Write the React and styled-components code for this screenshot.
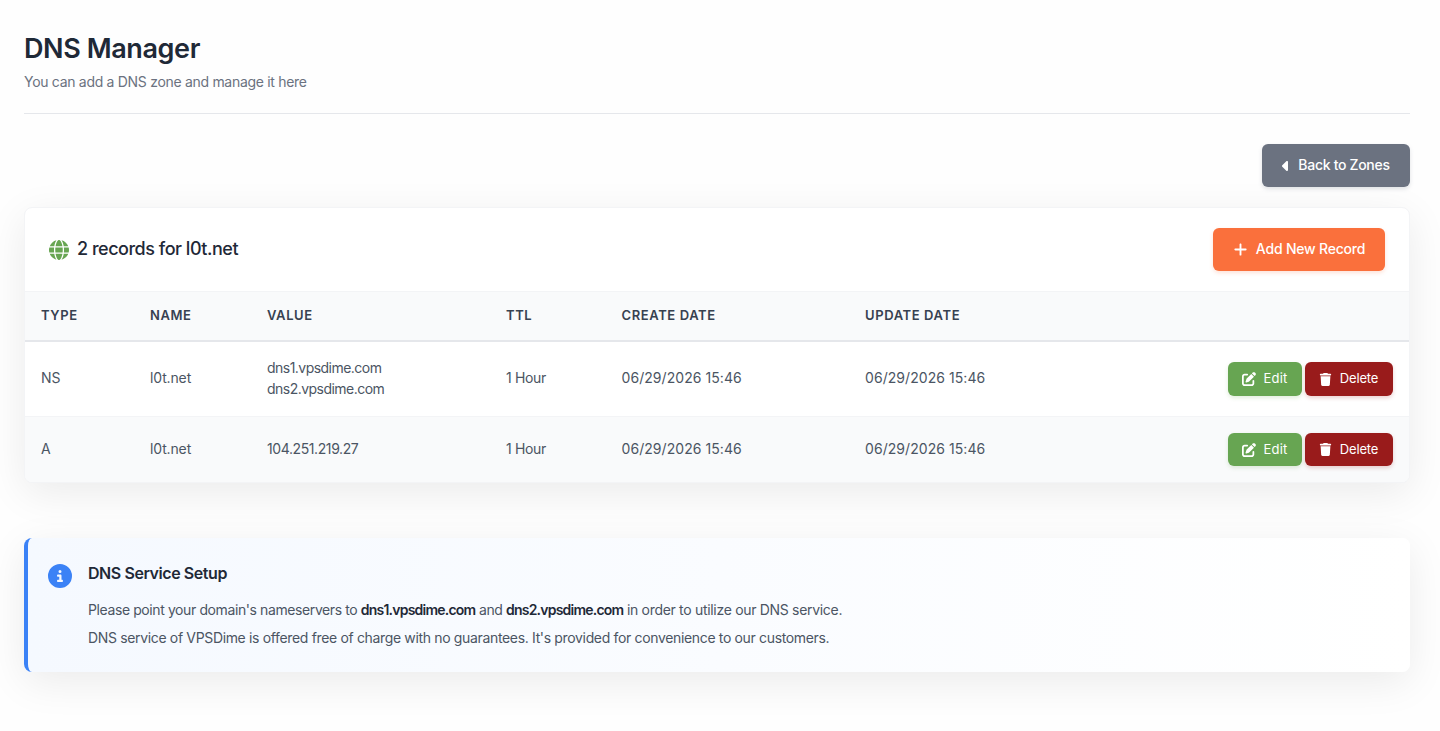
import React from 'react';
import styled, { createGlobalStyle } from 'styled-components';
import {
  FaCaretLeft,
  FaCircleInfo,
  FaGlobe,
  FaPenToSquare,
  FaPlus,
  FaTrash,
} from 'react-icons/fa6';

const records = [
  {
    type: 'NS',
    name: 'l0t.net',
    values: ['dns1.vpsdime.com', 'dns2.vpsdime.com'],
    ttl: '1 Hour',
    created: '06/29/2026 15:46',
    updated: '06/29/2026 15:46',
  },
  {
    type: 'A',
    name: 'l0t.net',
    values: ['104.251.219.27'],
    ttl: '1 Hour',
    created: '06/29/2026 15:46',
    updated: '06/29/2026 15:46',
  },
];

const App = () => {
  return (
    <>
      <GlobalStyle />
      <Page>
        <PageHeader>
          <Title>DNS Manager</Title>
          <Subtitle>You can add a DNS zone and manage it here</Subtitle>
        </PageHeader>
        <Toolbar>
          <Button $width={148} $color="#6b7280" $tracking={-0.3}>
            <BackIcon viewBox="0 0 256 512" />
            <Label>Back to Zones</Label>
          </Button>
        </Toolbar>
        <Card>
          <CardHeader>
            <CardTitle>
              <FaGlobe size={20} />
              <Label>2 records for l0t.net</Label>
            </CardTitle>
            <Button $width={172} $color="#fa703c" $tracking={-0.21}>
              <FaPlus size={15} />
              <Label>Add New Record</Label>
            </Button>
          </CardHeader>
          <HeadRow>
            <span>Type</span>
            <span>Name</span>
            <span>Value</span>
            <span>TTL</span>
            <span>Create Date</span>
            <span>Update Date</span>
          </HeadRow>
          {records.map((record) => (
            <Row key={record.type}>
              <Cell>{record.type}</Cell>
              <Cell $tracking={-0.14}>{record.name}</Cell>
              <Cell $tracking={record.type === 'A' ? -0.4 : -0.53}>
                {record.values.map((value) => (
                  <div key={value}>{value}</div>
                ))}
              </Cell>
              <Cell $tracking={-0.35}>{record.ttl}</Cell>
              <Cell $tracking={0.06}>{record.created}</Cell>
              <Cell $tracking={0.06}>{record.updated}</Cell>
              <Actions>
                <SmallButton $width={74} $color="#67a552" $tracking={0.2}>
                  <FaPenToSquare size={14} />
                  <Label>Edit</Label>
                </SmallButton>
                <SmallButton $width={88} $color="#991b1b" $tracking={-0.14}>
                  <FaTrash size={13} />
                  <Label>Delete</Label>
                </SmallButton>
              </Actions>
            </Row>
          ))}
        </Card>
        <InfoBox>
          <FaCircleInfo size={24} />
          <div>
            <InfoTitle>DNS Service Setup</InfoTitle>
            <InfoText $tracking={-0.4}>
              Please point your domain's nameservers to{' '}
              <strong>dns1.vpsdime.com</strong> and{' '}
              <strong>dns2.vpsdime.com</strong>{' '}
              <Tail>in order to utilize our DNS service.</Tail>
            </InfoText>
            <InfoText $tracking={-0.343}>
              DNS service of VPSDime is offered free of charge with no
              guarantees. It's provided for convenience to our customers.
            </InfoText>
          </div>
        </InfoBox>
      </Page>
    </>
  );
};

const GlobalStyle = createGlobalStyle`
  * {
    box-sizing: border-box;
  }
  body {
    margin: 0;
    background: #fefefe;
    color: #4b5563;
    font-family: Inter, 'Liberation Sans', sans-serif;
    font-size: 14px;
    line-height: 21px;
  }
`;

const Page = styled.main`
  min-height: 100vh;
  padding: 30px 30px 0 24px;
`;

const PageHeader = styled.header`
  height: 84px;
  border-bottom: 1px solid #e5e7eb;
`;

const Title = styled.h1`
  margin: 0;
  font-size: 27px;
  font-weight: 600;
  line-height: 37px;
  letter-spacing: -0.4px;
  color: #1f2937;
`;

const Subtitle = styled.p`
  margin: 4px 0 0;
  color: #6b7280;
  letter-spacing: -0.3px;
`;

const Toolbar = styled.div`
  display: flex;
  justify-content: flex-end;
  padding: 30px 0 20px;
`;

const Button = styled.button`
  display: flex;
  align-items: center;
  justify-content: center;
  gap: 8px;
  width: ${({ $width }) => $width}px;
  height: 43px;
  padding: 0;
  border: 0;
  border-radius: 6px;
  background: ${({ $color }) => $color};
  box-shadow: 0 2px 4px ${({ $color }) => $color}33;
  color: #fff;
  font-family: inherit;
  font-size: 14px;
  font-weight: 500;
  letter-spacing: ${({ $tracking }) => $tracking}px;
  white-space: nowrap;
  cursor: pointer;
`;

const Label = styled.span`
  padding-bottom: 2px;
`;

// the caret is narrower than a square icon, so it keeps its own box
const BackIcon = styled(FaCaretLeft)`
  width: 8px;
  height: 16px;
`;

const SmallButton = styled(Button)`
  height: 100%;
  font-size: 13px;
  font-weight: 400;
  svg {
    margin-left: -1px;
  }
`;

const Card = styled.section`
  border: 1px solid #f3f4f6;
  border-radius: 8px;
  background: #fff;
  box-shadow: 0 10px 40px rgba(0, 0, 0, 0.08);
  overflow: hidden;
`;

const CardHeader = styled.div`
  display: flex;
  align-items: center;
  justify-content: space-between;
  height: 84px;
  padding: 0 24px;
  border-bottom: 1px solid #f3f4f6;
`;

const CardTitle = styled.h2`
  display: flex;
  align-items: center;
  gap: 8px;
  margin: 0;
  font-size: 18px;
  font-weight: 500;
  letter-spacing: -0.48px;
  color: #1f2937;
  svg {
    color: #67a552;
  }
`;

const Row = styled.div`
  display: grid;
  grid-template-columns: 109px 117px 239px 115.5px 243.5px 1fr auto;
  align-items: center;
  height: 75px;
  padding: 0 16px;
  border-bottom: 1px solid #f3f4f6;
  &:last-child {
    height: 65px;
    border-bottom: 0;
    background: #f9fafb;
  }
`;

const HeadRow = styled(Row)`
  height: 50px;
  padding-bottom: 2px;
  border-bottom: 2px solid #e5e7eb;
  background: #f9fafb;
  color: #374151;
  font-size: 13px;
  font-weight: 600;
  letter-spacing: 0.6px;
  text-transform: uppercase;
`;

const Cell = styled.div`
  padding-bottom: 3px;
  letter-spacing: ${({ $tracking }) => $tracking || 0}px;
`;

const Actions = styled.div`
  display: flex;
  gap: 3px;
  height: 34px;
  ${Row}:last-child & {
    height: 33px;
  }
`;

const InfoBox = styled.section`
  display: flex;
  gap: 16px;
  height: 134px;
  margin-top: 55px;
  padding: 26px 24px 0 20px;
  border-left: 4px solid #3b82f6;
  border-radius: 8px;
  background: linear-gradient(90deg, #f5f9ff, #fafcff 50%, #fff);
  box-shadow: 0 10px 40px rgba(0, 0, 0, 0.08);
  > svg {
    flex: none;
    color: #3b82f6;
  }
`;

const InfoTitle = styled.h3`
  margin: -3px 0 11px;
  font-size: 16px;
  font-weight: 600;
  line-height: 24px;
  letter-spacing: -0.43px;
  color: #1f2937;
`;

const InfoText = styled.p`
  margin: 0;
  line-height: 28px;
  letter-spacing: ${({ $tracking }) => $tracking}px;
  strong {
    font-weight: 600;
    letter-spacing: -0.78px;
    color: #1f2937;
  }
`;

const Tail = styled.span`
  letter-spacing: -0.31px;
`;

export default App;
